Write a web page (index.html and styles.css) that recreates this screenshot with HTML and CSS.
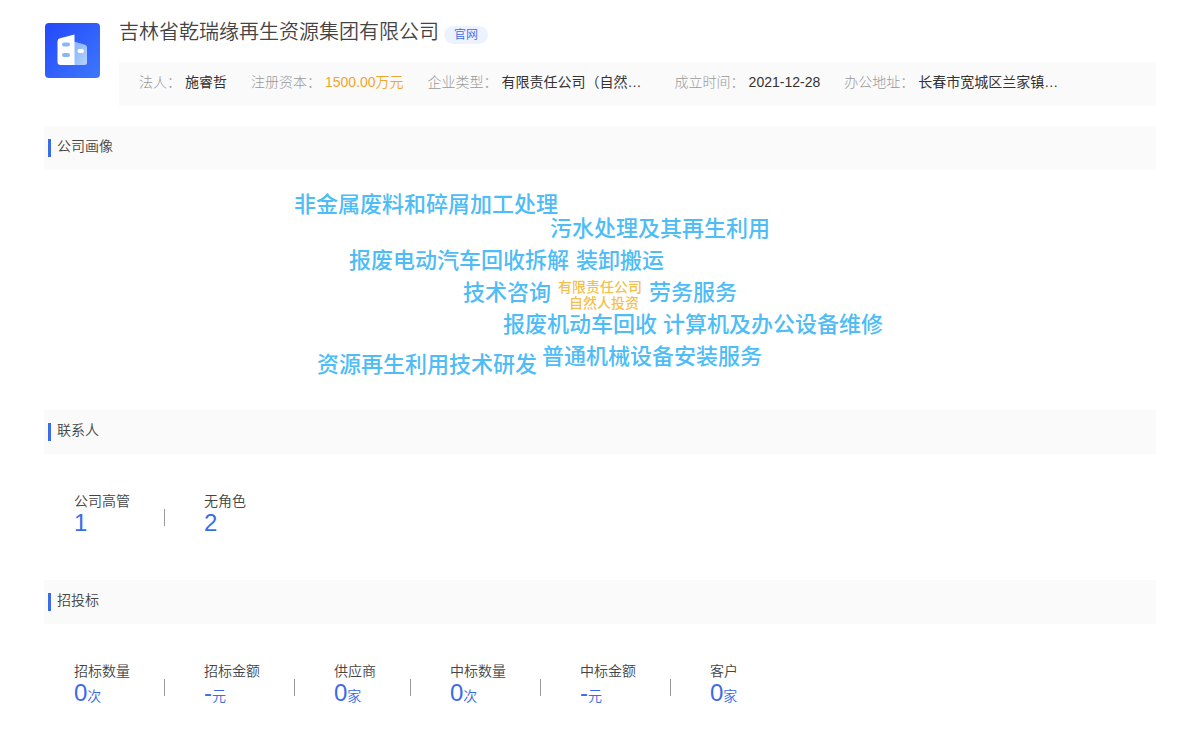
FILE: index.html
```html
<!DOCTYPE html>
<html lang="zh-CN">
<head>
<meta charset="utf-8">
<title>吉林省乾瑞缘再生资源集团有限公司</title>
<link rel="stylesheet" href="styles.css">
</head>
<body>
<main class="page">
  <header class="company">
    <svg class="logo" viewBox="0 0 55 55" aria-hidden="true">
      <defs>
        <linearGradient id="bg" x1="0" y1="0" x2="1" y2="1"><stop offset="0" stop-color="#2448fb"/><stop offset="1" stop-color="#3d78fb"/></linearGradient>
        <linearGradient id="side" x1="0" y1="0" x2="1" y2="1"><stop offset="0" stop-color="#86b2fb"/><stop offset="1" stop-color="#b5d2fd"/></linearGradient>
      </defs>
      <rect width="55" height="55" rx="4" fill="url(#bg)"/>
      <path d="M29 18.500l11 3.200q2 .6 2 2.600v15.200q0 2.500-2.500 2.500H29z" fill="url(#side)"/>
      <path d="M15 15.300l14.500-3.800V42H15.500q-3 0-3-3V18.300q0-2.300 2.500-3z" fill="#fff"/>
      <rect x="17" y="19.500" width="8" height="4" rx="2" fill="#8db4f8"/>
      <rect x="17" y="30" width="8" height="4" rx="2" fill="#8db4f8"/>
      <rect x="32.500" y="26" width="6.500" height="4" rx="2" fill="#fff"/>
    </svg>
    <div class="company-main">
      <div class="title-row">
        <h1 class="title">吉林省乾瑞缘再生资源集团有限公司</h1>
        <a class="site-link" href="#">官网</a>
      </div>
      <dl class="info">
        <div class="info-item"><dt>法人：</dt><dd>施睿哲</dd></div>
        <div class="info-item"><dt>注册资本：</dt><dd class="capital">1500.00万元</dd></div>
        <div class="info-item"><dt>企业类型：</dt><dd class="clipped">有限责任公司（自然…</dd></div>
        <div class="info-item"><dt>成立时间：</dt><dd>2021-12-28</dd></div>
        <div class="info-item"><dt>办公地址：</dt><dd class="clipped">长春市宽城区兰家镇…</dd></div>
      </dl>
    </div>
  </header>

  <section>
    <h2 class="section-title">公司画像</h2>
    <div class="cloud">
      <span class="word w1">非金属废料和碎屑加工处理</span>
      <span class="word w2">污水处理及其再生利用</span>
      <span class="word w3">报废电动汽车回收拆解</span>
      <span class="word w4">装卸搬运</span>
      <span class="word w5">技术咨询</span>
      <span class="word small w6">有限责任公司</span>
      <span class="word small w7">自然人投资</span>
      <span class="word w8">劳务服务</span>
      <span class="word w9">报废机动车回收</span>
      <span class="word w10">计算机及办公设备维修</span>
      <span class="word w11">资源再生利用技术研发</span>
      <span class="word w12">普通机械设备安装服务</span>
    </div>
  </section>

  <section>
    <h2 class="section-title">联系人</h2>
    <ul class="stats">
      <li class="stat"><span class="stat-label">公司高管</span><span class="stat-value">1</span></li>
      <li class="stat"><span class="stat-label">无角色</span><span class="stat-value">2</span></li>
    </ul>
  </section>

  <section>
    <h2 class="section-title">招投标</h2>
    <ul class="stats">
      <li class="stat"><span class="stat-label">招标数量</span><span class="stat-value">0<small>次</small></span></li>
      <li class="stat"><span class="stat-label">招标金额</span><span class="stat-value">-<small>元</small></span></li>
      <li class="stat"><span class="stat-label">供应商</span><span class="stat-value">0<small>家</small></span></li>
      <li class="stat"><span class="stat-label">中标数量</span><span class="stat-value">0<small>次</small></span></li>
      <li class="stat"><span class="stat-label">中标金额</span><span class="stat-value">-<small>元</small></span></li>
      <li class="stat"><span class="stat-label">客户</span><span class="stat-value">0<small>家</small></span></li>
    </ul>
  </section>
</main>
</body>
</html>
```
FILE: styles.css
```css
* { box-sizing: border-box; }
body {
  margin: 0;
  background: #fff;
  color: #444;
  font: 350 14px/20px "Liberation Sans", "Noto Sans CJK SC", sans-serif;
}
h1, h2, dl, dd, ul { margin: 0; padding: 0; font-weight: inherit; }
ul { list-style: none; }
.page { padding: 16px 44px 0; }

.company { display: flex; gap: 20px; margin-bottom: 20px; }
.logo { flex: none; width: 55px; height: 55px; margin: 7px 0 0 1px; }
.company-main { flex: 1; min-width: 0; margin-left: -1px; }
.title-row { display: flex; align-items: flex-start; gap: 5px; height: 30px; margin-bottom: 16px; }
.title { font-size: 20px; line-height: 32px; }
.site-link {
  padding: 0 10px;
  margin-top: 10px;
  border-radius: 9px;
  background: #edf3fe;
  color: #3a6be8;
  font-size: 12px;
  line-height: 18px;
  text-decoration: none;
}
.info { display: flex; gap: 24px; height: 44px; padding: 10px 20px; background: #fafafa; white-space: nowrap; }
.info-item { display: flex; gap: 4px; }
.info dt { color: #999; font-weight: 300; }
.info dd { color: #333; font-weight: 400; }
.info .capital { color: #f0a52e; font-weight: 350; }
.info .clipped { width: 149px; overflow: hidden; text-overflow: ellipsis; }

.section-title {
  display: flex;
  align-items: center;
  gap: 6px;
  height: 44px;
  padding: 0 4px 4px;
  background: #fafafa;
  font-size: 14px;
}
.section-title::before { content: ""; width: 3px; height: 18px; margin-top: 4px; background: #3a6be8; }

.cloud { position: relative; width: 640px; height: 240px; margin: 0 auto; }
.word {
  position: absolute;
  color: #4ebcf6;
  font-size: 22px;
  line-height: 32px;
  font-weight: 500;
  white-space: nowrap;
}
.word.small { color: #f5bf4d; font-size: 14px; line-height: 16px; }
.w1 { left: 14px; top: 19px; }
.w2 { left: 270px; top: 43px; }
.w3 { left: 69px; top: 75px; }
.w4 { left: 296px; top: 75px; }
.w5 { left: 183px; top: 107px; }
.w6 { left: 278px; top: 109px; }
.w7 { left: 289px; top: 125px; }
.w8 { left: 369px; top: 107px; }
.w9 { left: 223px; top: 139px; }
.w10 { left: 383px; top: 139px; }
.w11 { left: 37px; top: 179px; }
.w12 { left: 262px; top: 171px; }

.stats { display: flex; height: 126px; padding: 37px 30px 0; }
.stat { display: flex; flex-direction: column; position: relative; }
.stat + .stat { margin-left: 74px; }
.stat + .stat::before {
  content: "";
  position: absolute;
  left: -40px;
  top: 18px;
  width: 1px;
  height: 17px;
  background: #999;
}
.stat-value { color: #3a6be8; font-size: 24px; line-height: 24px; }
.stat-value small { font-size: 14px; }
```
